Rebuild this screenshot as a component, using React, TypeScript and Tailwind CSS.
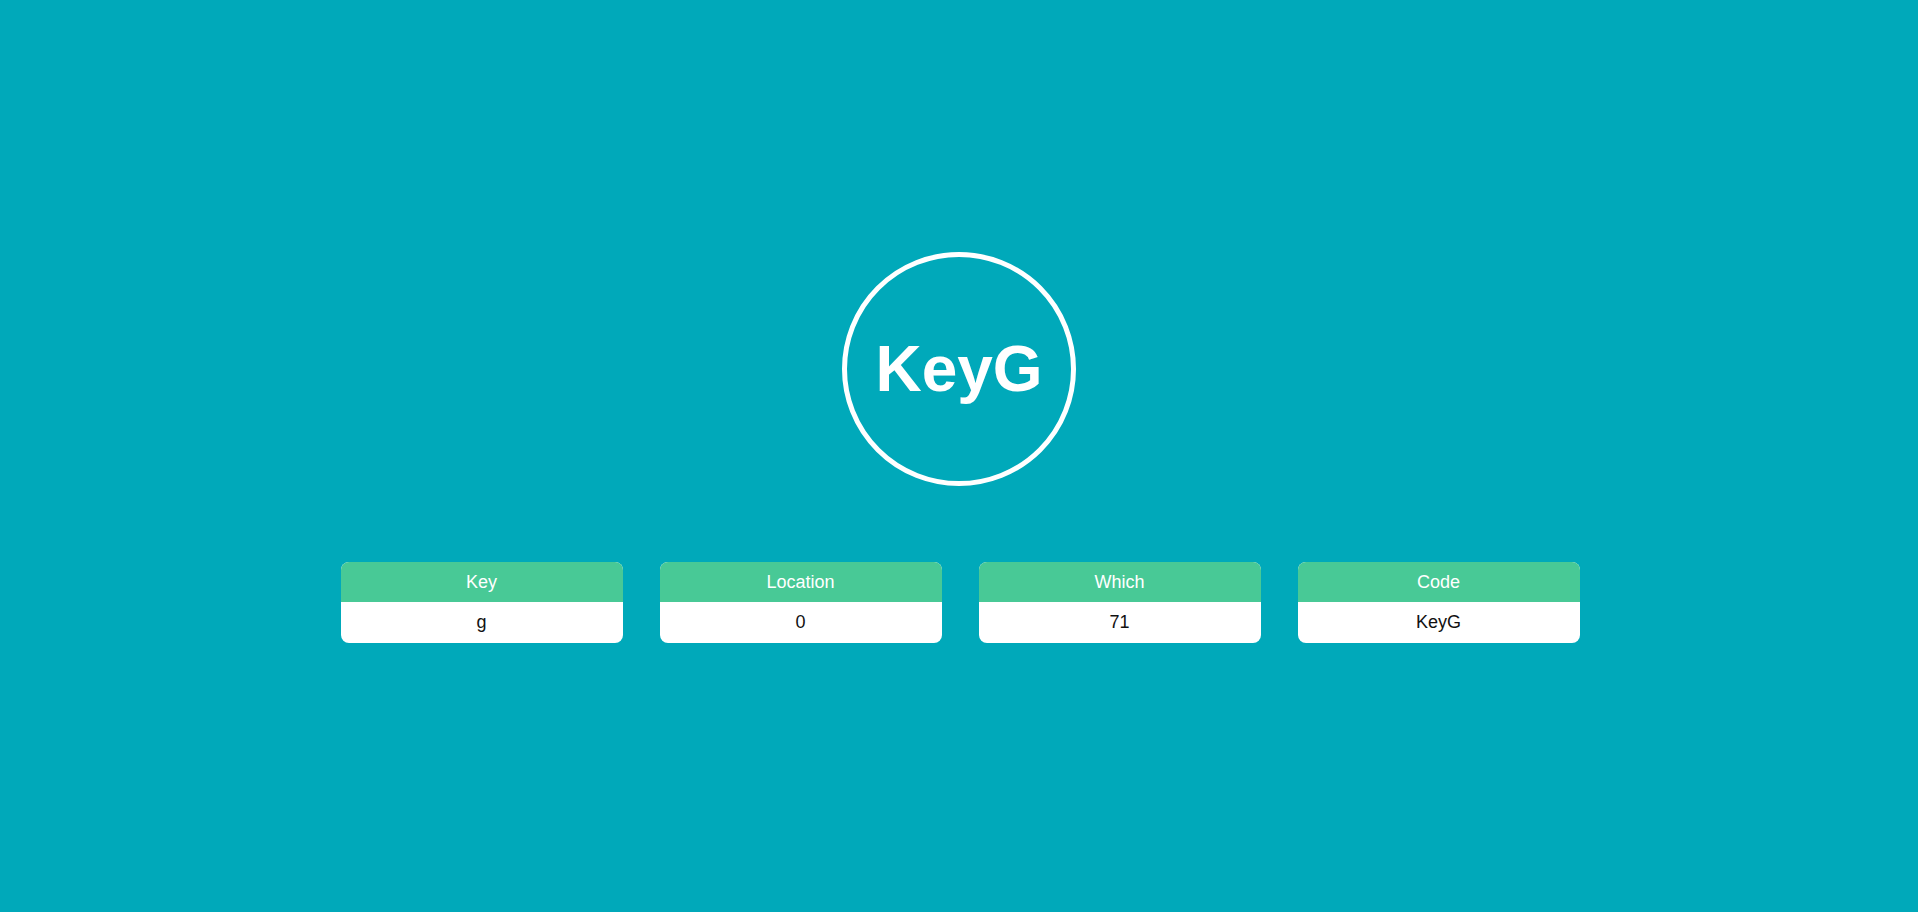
import React from "react";

const fields = [
  { label: "Key", value: "g" },
  { label: "Location", value: "0" },
  { label: "Which", value: "71" },
  { label: "Code", value: "KeyG" },
];

export default function App() {
  return (
    <div
      className="flex min-h-screen w-full flex-col items-center bg-[#00a9ba] pt-[252px]"
      style={{ fontFamily: "'Liberation Sans', Arial, sans-serif" }}
    >
      <div className="flex h-[234px] w-[234px] items-center justify-center rounded-full border-[5px] border-white">
        <span className="text-[64px] font-bold leading-none text-white">KeyG</span>
      </div>

      <div className="mt-[76px] flex gap-[37px] pl-[2px]">
        {fields.map((f) => (
          <div key={f.label} className="w-[282px] overflow-hidden rounded-[8px] bg-white">
            <div className="flex h-[40px] items-center justify-center bg-[#48c996] text-[18px] text-white">
              {f.label}
            </div>
            <div className="flex h-[41px] items-center justify-center text-[18px] text-[#111]">
              {f.value}
            </div>
          </div>
        ))}
      </div>
    </div>
  );
}
